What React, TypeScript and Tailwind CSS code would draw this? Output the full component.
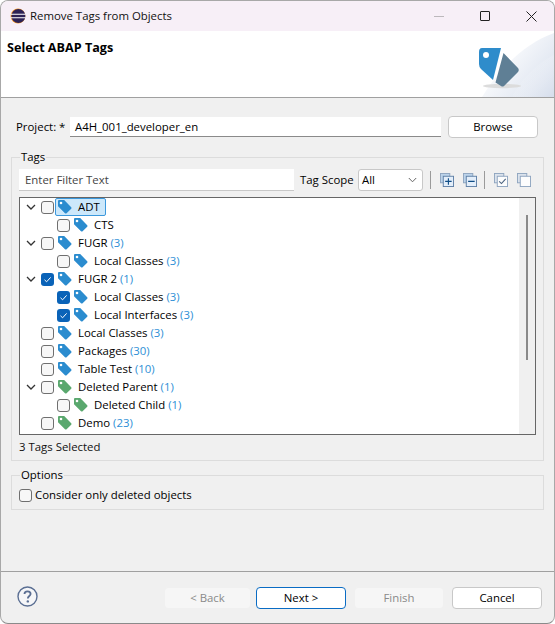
import React from "react";

const font = { fontFamily: '"Open Sans", "Noto Sans", sans-serif' };

function Tag({ color = "#2b8ccf" }: { color?: string }) {
  return (
    <svg width="15" height="15" viewBox="0 0 15 15" className="shrink-0 -mt-[2px]">
      <path d="M1 2.2C1 1.5 1.5 1 2.2 1H7.2L14.2 8.2C14.7 8.7 14.7 9.3 14.2 9.8L9.6 14.2C9.1 14.7 8.5 14.7 8 14.2L1 7.2Z" fill={color} />
      <circle cx="4" cy="4" r="1.3" fill="#fff" />
    </svg>
  );
}

function Check({ checked = false }: { checked?: boolean }) {
  if (checked)
    return (
      <span className="w-[13px] h-[13px] rounded-[3px] bg-[#0a63b8] flex items-center justify-center shrink-0">
        <svg width="9" height="9" viewBox="0 0 9 9"><path d="M1.5 4.8L3.6 6.8L7.6 2.4" stroke="#fff" strokeWidth="1" fill="none" /></svg>
      </span>
    );
  return <span className="w-[13px] h-[13px] rounded-[3px] border border-[#6f6f6f] shrink-0 bg-[#f7f7f7]" />;
}

type Row = { name: string; n?: number; level: 0 | 1; exp?: boolean; checked?: boolean; green?: boolean; sel?: boolean };
const rows: Row[] = [
  { name: "ADT", level: 0, exp: true, sel: true },
  { name: "CTS", level: 1 },
  { name: "FUGR", n: 3, level: 0, exp: true },
  { name: "Local Classes", n: 3, level: 1 },
  { name: "FUGR 2", n: 1, level: 0, exp: true, checked: true },
  { name: "Local Classes", n: 3, level: 1, checked: true },
  { name: "Local Interfaces", n: 3, level: 1, checked: true },
  { name: "Local Classes", n: 3, level: 0 },
  { name: "Packages", n: 30, level: 0 },
  { name: "Table Test", n: 10, level: 0 },
  { name: "Deleted Parent", n: 1, level: 0, exp: true, green: true },
  { name: "Deleted Child", n: 1, level: 1, green: true },
  { name: "Demo", n: 23, level: 0, green: true },
];

function TreeRow({ r }: { r: Row }) {
  return (
    <div className={`h-[18px] flex items-center ${r.level === 1 ? "pl-[37px]" : "pl-[21px]"}`}>
      {r.exp ? (
        <svg width="10" height="6" viewBox="0 0 10 6" className="-ml-[15px] mr-[5px] shrink-0"><path d="M1 1L5 5L9 1" stroke="#333" strokeWidth="1.3" fill="none" /></svg>
      ) : null}
      <Check checked={r.checked} />
      {r.sel ? (
        <span className="ml-[1px] h-[18px] w-[51px] flex items-center pl-[1px] bg-[#cce8fb] border border-[#3b98dc] rounded-[2px]">
          <Tag color={r.green ? "#5aa86e" : "#2b8ccf"} />
          <span className="ml-[6px] text-black">{r.name}</span>
        </span>
      ) : (
        <>
          <span className="ml-[3px] flex"><Tag color={r.green ? "#5aa86e" : "#2b8ccf"} /></span>
          <span className="ml-[6px] text-black whitespace-nowrap">
            {r.name}
            {r.n !== undefined ? <span className="text-[#2e8fd6]"> ({r.n})</span> : null}
          </span>
        </>
      )}
    </div>
  );
}

function Btn({ children, disabled, def, w = "w-[90px]" }: { children: React.ReactNode; disabled?: boolean; def?: boolean; w?: string }) {
  const cls = disabled
    ? "bg-[#f6f6f6] border-[#f0f0f0] text-[#8a8a8a]"
    : def
    ? "bg-white border-[#0a6cc4] text-black"
    : "bg-white border-[#c8c8c8] text-black";
  return <div className={`${w} h-[22px] rounded-[4px] border flex items-center justify-center ${cls}`}>{children}</div>;
}

function ToolIcon({ kind }: { kind: "plus" | "minus" | "check" | "empty" }) {
  const dark = kind === "plus" || kind === "minus";
  return (
    <svg width="14" height="14" viewBox="0 0 15 15" className="shrink-0">
      <rect x="0.5" y="0.5" width="10" height="10" fill={dark ? "#bcd3ea" : "#dbe3ec"} stroke="#8ea4bf" />
      <rect x="3.5" y="3.5" width="11" height="11" fill={dark ? "#e3eefa" : "#fdfdfd"} stroke={dark ? "#5e7fa6" : "#8ea4bf"} />
      {kind === "plus" && <path d="M5.5 9H12.5M9 5.5V12.5" stroke="#0f4d86" strokeWidth="1.2" />}
      {kind === "minus" && <path d="M5.5 9H12.5" stroke="#0f4d86" strokeWidth="1.2" />}
      {kind === "check" && <path d="M5.5 9L8 11.3L12.5 6.2" stroke="#4d6480" strokeWidth="1.2" fill="none" />}
    </svg>
  );
}

export default function App() {
  return (
    <div style={font} className="w-[555px] h-[624px] flex flex-col bg-[#f0f0f0] text-[11.4px] text-black overflow-hidden rounded-[8px] border border-[#a8a8a8] border-b-[#8a8a8a]">
      <div className="h-[30px] shrink-0 bg-[#f7eff7] flex items-center pl-[9px]">
        <svg width="16" height="16" viewBox="0 0 16 16" className="shrink-0">
          <circle cx="8" cy="8" r="7.4" fill="#f7941e" />
          <circle cx="8.4" cy="8" r="7" fill="#2c2255" />
          <path d="M1 6.3H15.4M1 9.7H15.4" stroke="#fff" strokeWidth="1.1" />
        </svg>
        <span className="ml-[4px] text-[#111]">Remove Tags from Objects</span>
        <div className="ml-auto flex items-center">
          <span className="w-[46px] flex justify-center"><span className="w-[10px] h-px bg-[#bcb8bc]" /></span>
          <span className="w-[46px] flex justify-center"><span className="w-[10px] h-[10px] border border-[#222] rounded-[1px]" /></span>
          <span className="w-[46px] flex justify-center">
            <svg width="11" height="11" viewBox="0 0 11 11"><path d="M.5.5L10.5 10.5M10.5.5L.5 10.5" stroke="#222" /></svg>
          </span>
        </div>
      </div>

      <div className="relative h-[67px] shrink-0 bg-white border-b border-[#a0a0a0] pl-[6px] pt-[8px] overflow-hidden">
        <div className="font-bold text-[12.6px] text-black">Select ABAP Tags</div>
        <svg width="100" height="66" viewBox="0 0 100 66" className="absolute right-0 top-0">
          <defs>
            <linearGradient id="g" x1="0" y1="0" x2="1" y2="0.7">
              <stop offset="0.25" stopColor="#ffffff" />
              <stop offset="1" stopColor="#dce3ef" />
            </linearGradient>
            <linearGradient id="h" x1="0.2" y1="0.2" x2="1" y2="0.9">
              <stop offset="0.2" stopColor="#ffffff" stopOpacity="0" />
              <stop offset="1" stopColor="#d6deec" stopOpacity="0.8" />
            </linearGradient>
          </defs>
          <path d="M100 2V66H28C46 36 72 12 100 2Z" fill="url(#g)" />
          <path d="M100 24V66H58C68 46 84 32 100 24Z" fill="url(#h)" />
          <ellipse cx="48" cy="55" rx="19" ry="2.2" fill="#dcdcdc" />
          <path d="M28 17Q25 17 25 21V33Q25 36 27 38L39 49L47 17Z" fill="#2e8ccb" />
          <path d="M49.5 22L64 37Q65.5 39 64 41L50 55Q48.5 56 47 55L41.5 51.5Z" fill="#5f7f95" />
          <circle cx="32" cy="24" r="3" fill="#fff" />
        </svg>
      </div>

      <div className="flex-1 flex flex-col px-[10px] min-h-0">
        <div className="h-[24px] mt-[17px] flex items-center pl-[5px] pr-[6px]">
          <span className="w-[54px]">Project: *</span>
          <div className="w-[371px] h-[20px] bg-white border-b border-[#8a8a8a] flex items-center pl-[5px] text-black">A4H_001_developer_en</div>
          <div className="ml-[7px]"><Btn>Browse</Btn></div>
        </div>

        <fieldset className="mt-[10px] h-[312px] border border-[#dcdcdc] px-[7px] pb-0 min-w-0">
          <legend className="ml-[1px] px-px leading-[16px]">Tags</legend>
          <div className="mt-[4px] h-[22px] flex items-center">
            <div className="w-[275px] h-[22px] bg-white border-b border-[#c8c8c8] flex items-center pl-[6px] text-[#444]">Enter Filter Text</div>
            <span className="ml-[6px] w-[58px] text-black">Tag Scope</span>
            <div className="w-[65px] h-[22px] bg-white border border-[#c8c8c8] rounded-[3px] flex items-center pl-[3px] pr-[5px] justify-between text-black">
              All
              <svg width="9" height="6" viewBox="0 0 9 6"><path d="M.8 1L4.5 4.8L8.2 1" stroke="#666" fill="none" /></svg>
            </div>
            <span className="ml-[7px] w-px h-[18px] bg-[#9a9a9a]" />
            <span className="ml-[9px] flex"><ToolIcon kind="plus" /></span>
            <span className="ml-[9px] flex"><ToolIcon kind="minus" /></span>
            <span className="ml-[7px] w-px h-[18px] bg-[#9a9a9a]" />
            <span className="ml-[9px] flex"><ToolIcon kind="check" /></span>
            <span className="ml-[9px] flex"><ToolIcon kind="empty" /></span>
          </div>
          <div className="mt-[6px] h-[238px] bg-white border border-[#666] flex">
            <div className="flex-1 min-w-0">
              {rows.map((r, i) => <TreeRow key={i} r={r} />)}
            </div>
            <div className="w-[16px] bg-[#f0f0f0] flex justify-center pt-[17px]">
              <div className="w-[2px] h-[145px] bg-[#8a8a8a]" />
            </div>
          </div>
          <div className="h-[24px] flex items-center text-[#111]">3 Tags Selected</div>
        </fieldset>

        <fieldset className="mt-[6px] h-[43px] border border-[#dcdcdc] px-[7px] min-w-0">
          <legend className="ml-[1px] px-px leading-[16px]">Options</legend>
          <div className="mt-[2px] flex items-center h-[20px] text-black">
            <Check />
            <span className="ml-[3px]">Consider only deleted objects</span>
          </div>
        </fieldset>
      </div>

      <div className="h-[52px] shrink-0 border-t border-[#a0a0a0] flex items-start pt-[15px] pl-[16px] pr-[12px]">
        <svg width="21" height="21" viewBox="0 0 21 21" className="shrink-0 -mt-px">
          <circle cx="10.5" cy="10.5" r="9.5" fill="#f5f6f8" stroke="#5b6f93" strokeWidth="1.4" />
          <path d="M7.5 8C7.5 6.2 9 5.3 10.5 5.3C12.2 5.3 13.6 6.3 13.6 8C13.6 10 10.8 10 10.8 12.4" stroke="#5b6f93" strokeWidth="1.8" fill="none" />
          <circle cx="10.8" cy="15.4" r="1.2" fill="#5b6f93" />
        </svg>
        <div className="ml-auto flex items-center">
          <Btn disabled w="w-[87px]">&lt; Back</Btn>
          <div className="ml-[5px]"><Btn def>Next &gt;</Btn></div>
          <div className="ml-[8px]"><Btn disabled>Finish</Btn></div>
          <div className="ml-[8px]"><Btn>Cancel</Btn></div>
        </div>
      </div>
    </div>
  );
}
